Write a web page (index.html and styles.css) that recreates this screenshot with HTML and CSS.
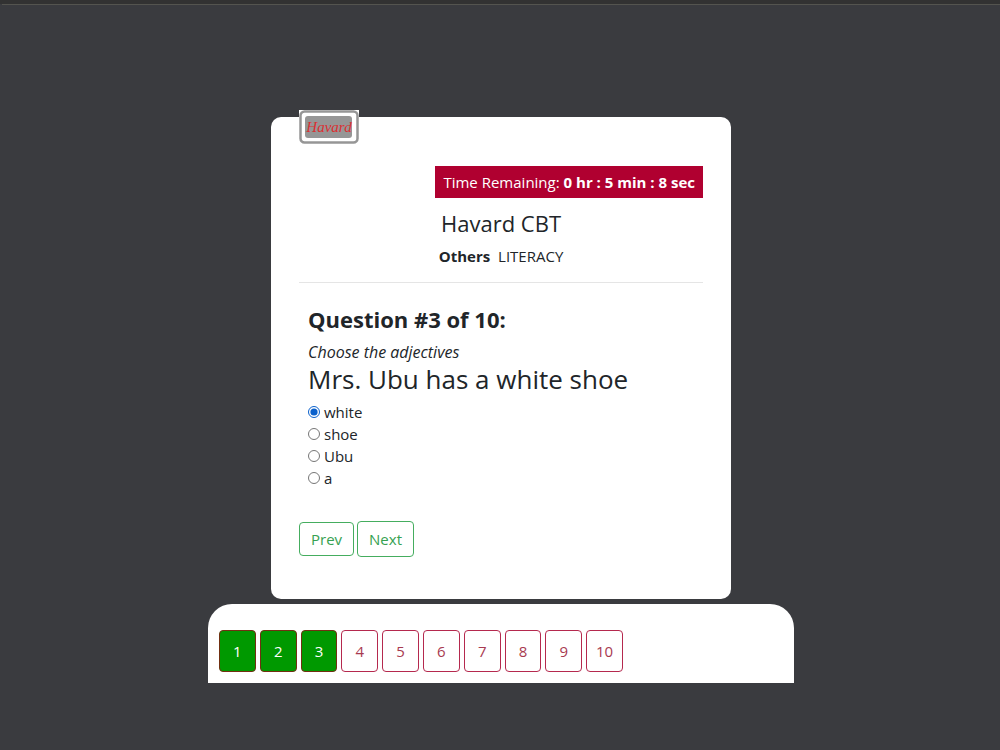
FILE: index.html
```
<!DOCTYPE html>
<html lang="en">
<head>
    <meta charset="UTF-8">
    <meta name="viewport" content="width=device-width, initial-scale=1.0">
    <title>Havard CBT</title>
    <link rel="stylesheet" href="styles.css">
</head>
<body>
    <main class="page">
        <form class="exam-card" id="examForm">
            <svg class="logo" viewBox="0 0 60 34" role="img" aria-label="Havard">
                <rect width="60" height="33" fill="#ffffff"/>
                <rect x="1.5" y="1.5" width="57" height="31" rx="4" fill="#ffffff" stroke="#969696" stroke-width="2.5"/>
                <rect x="6" y="6" width="47" height="22" rx="3" fill="#969696"/>
                <text x="30" y="22" text-anchor="middle" class="logo-text">Havard</text>
            </svg>

            <div class="timer">Time Remaining: <b>0 hr : 5 min : 8 sec</b></div>

            <header class="exam-header">
                <h1>Havard CBT</h1>
                <p><b>Others</b> <span class="subject">LITERACY</span></p>
            </header>

            <!-- Question Section -->
            <div class="question">
                <h2>Question #3 of 10:</h2>
                <p class="instruction">Choose the adjectives</p>
                <p class="question-text">Mrs. Ubu has a white shoe</p>

                <div class="option">
                    <input type="radio" id="optionA" name="answer" value="white" checked>
                    <label for="optionA">white</label>
                </div>
                <div class="option">
                    <input type="radio" id="optionB" name="answer" value="shoe">
                    <label for="optionB">shoe</label>
                </div>
                <div class="option">
                    <input type="radio" id="optionC" name="answer" value="Ubu">
                    <label for="optionC">Ubu</label>
                </div>
                <div class="option">
                    <input type="radio" id="optionD" name="answer" value="a">
                    <label for="optionD">a</label>
                </div>
            </div>

            <div class="controls">
                <button type="button">Prev</button>
                <button type="button" class="next">Next</button>
            </div>
        </form>

        <!-- Question numbers -->
        <nav class="question-nav">
            <div class="numbers">
                <button type="button" class="answered">1</button>
                <button type="button" class="answered">2</button>
                <button type="button" class="answered">3</button>
                <button type="button">4</button>
                <button type="button">5</button>
                <button type="button">6</button>
                <button type="button">7</button>
                <button type="button">8</button>
                <button type="button">9</button>
                <button type="button">10</button>
            </div>
        </nav>
    </main>
</body>
</html>
```
FILE: styles.css
```
* {
    box-sizing: border-box;
}

body {
    margin: 0;
    min-height: 100vh;
    border-top: 4px solid #323232;
    background-color: #3a3b3f;
    color: #212529;
    font-family: 'Open Sans', sans-serif;
    font-size: 15px;
    line-height: 22px;
}

h1, h2, p {
    margin: 0;
}

button {
    font-family: inherit;
    font-size: 15px;
    line-height: 22px;
    border-radius: 4px;
    background-color: #ffffff;
    cursor: pointer;
}

.page {
    display: flex;
    flex-direction: column;
    align-items: center;
    gap: 5px;
    padding: 112px 16px 64px;
    border-top: 1px solid #54544f;
    margin-left: 2px;
}

.exam-card {
    position: relative;
    width: 100%;
    max-width: 460px;
    padding: 49px 28px 42px;
    border-radius: 10px;
    background-color: #ffffff;
}

/* the logo hangs over the top edge of the card */
.logo {
    position: absolute;
    top: -7px;
    left: 28px;
    width: 60px;
    height: 34px;
}

.logo-text {
    font-family: 'Liberation Serif', serif;
    font-size: 15px;
    font-style: italic;
    fill: #dc2f32;
}

.timer {
    width: fit-content;
    margin-left: auto;
    padding: 5px 8px;
    background-color: #b00030;
    color: #ffffff;
}

.exam-header {
    padding: 11px 0 15px;
    border-bottom: 1px solid #e5e5e5;
    text-align: center;
}

.exam-header h1 {
    margin-bottom: 8px;
    font-size: 22px;
    font-weight: normal;
    line-height: 28px;
}

.subject {
    margin-left: 4px;
}

.question {
    padding: 22px 9px 0;
}

.question h2 {
    margin-bottom: 8px;
    font-size: 22px;
    line-height: 28px;
}

.instruction {
    font-size: 16px;
    font-style: italic;
}

.question-text {
    margin-bottom: 6px;
    font-size: 26px;
    line-height: 32px;
}

.option {
    display: flex;
    align-items: center;
    gap: 4px;
}

.option input {
    width: 12px;
    height: 12px;
    margin: 0;
    accent-color: #0b61cc;
}

.controls {
    display: flex;
    align-items: center;
    gap: 3px;
    margin-top: 32px;
}

.controls button {
    padding: 5px 11px;
    border: 1px solid #45ad5f;
    color: #36a151;
}

.controls .next {
    padding: 6px 11px;
}

.question-nav {
    width: 100%;
    max-width: 586px;
    padding: 26px 11px 11px;
    border-radius: 24px 24px 0 0;
    background-color: #ffffff;
}

.numbers {
    display: grid;
    grid-template-columns: repeat(10, 1fr);
    gap: 4px;
    max-width: 404px;
}

.numbers button {
    height: 42px;
    padding: 0;
    border: 1px solid #b5294e;
    color: #a83a50;
}

.numbers .answered {
    border-color: #713012;
    background-color: #009900;
    color: #ffffff;
}
```
